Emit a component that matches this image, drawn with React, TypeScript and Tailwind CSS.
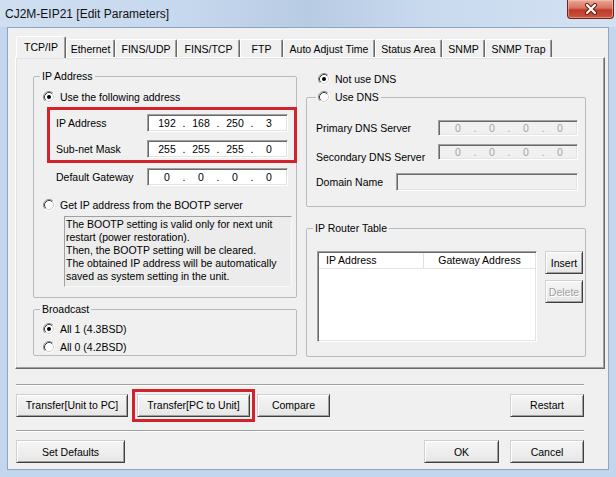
import clsx from "clsx"
import type { ReactNode } from "react"

// classic (non-themed) radio button
const Radio = ({ checked }: { checked?: boolean }) => (
  <svg width="12" height="12" viewBox="0 0 12 12" className="shrink-0">
    <circle cx="6" cy="6" r="4.5" fill="#fff" />
    <path d="M9.89 2.11A5.5 5.5 0 0 0 2.11 9.89" fill="none" stroke="#8a8a8a" />
    <path d="M2.11 9.89A5.5 5.5 0 0 0 9.89 2.11" fill="none" stroke="#fff" />
    <path d="M9.18 2.82A4.5 4.5 0 0 0 2.82 9.18" fill="none" stroke="#404040" />
    <path d="M2.82 9.18A4.5 4.5 0 0 0 9.18 2.82" fill="none" stroke="#d4d0c8" />
    {checked && <circle cx="6" cy="6" r="2" fill="#000" />}
  </svg>
)

const RadioRow = ({ label, checked, className }: { label: string; checked?: boolean; className?: string }) => (
  <div className={clsx("flex items-center gap-[5px] h-[14px]", className)}>
    <Radio checked={checked} />
    <span>{label}</span>
  </div>
)

const Group = ({ legend, className, children }: { legend: ReactNode; className?: string; children: ReactNode }) => (
  <fieldset className={clsx("border border-[#b4bbc1] rounded-[2px] min-w-0", className)}>
    <legend className="ml-[6px] px-[2px] leading-[12px]">{legend}</legend>
    {children}
  </fieldset>
)

const sunken =
  "border border-t-[#a0a0a0] border-l-[#a0a0a0] border-b-white border-r-white shadow-[inset_1px_1px_0_#696969,inset_-1px_-1px_0_#e3e3e3]"

const IpField = ({ values, disabled, className }: { values: string[]; disabled?: boolean; className?: string }) => (
  <div
    className={clsx(
      "flex items-center pl-[4px]",
      sunken,
      disabled ? "bg-[#f0f0f0] text-[#a3a3a3]" : "bg-white text-black",
      className
    )}
  >
    {values.map((v, i) => (
      <div key={i} className="flex">
        {i > 0 && <span className="w-[4px] text-center">.</span>}
        <span className="w-[30px] text-center">{v}</span>
      </div>
    ))}
  </div>
)

const Btn = ({ children, className, disabled }: { children: ReactNode; className?: string; disabled?: boolean }) => (
  <button
    className={clsx(
      "h-[23px] shrink-0 border border-t-[#d0d0d0] border-l-[#d0d0d0] border-b-[#404040] border-r-[#404040] bg-[linear-gradient(#f6f6f6,#e6e6e6)] shadow-[inset_1px_1px_0_#fff,inset_-1px_-1px_0_#a0a0a0]",
      disabled ? "text-[#a0a0a0] [text-shadow:1px_1px_0_#fff]" : "text-black",
      className
    )}
  >
    {children}
  </button>
)

const Separator = () => <div className="ml-[8px] w-[568px] h-[2px] border-t border-t-[#a0a0a0] border-b border-b-white" />

const tabs = [
  { name: "TCP/IP", w: "w-[50px]" },
  { name: "Ethernet", w: "w-[49px]" },
  { name: "FINS/UDP", w: "w-[62px]" },
  { name: "FINS/TCP", w: "w-[63px]" },
  { name: "FTP", w: "w-[43px]" },
  { name: "Auto Adjust Time", w: "w-[92px]" },
  { name: "Status Area", w: "w-[67px]" },
  { name: "SNMP", w: "w-[43px]" },
  { name: "SNMP Trap", w: "w-[67px]" },
]

export default function App() {
  return (
    <div className="w-[616px] h-[477px] flex flex-col bg-[#c2d6ed] font-['Liberation_Sans',Arial,sans-serif] text-[10.5px] leading-[12px] text-black overflow-hidden">
      {/* Title bar */}
      <div className="h-[27px] shrink-0 flex items-start bg-[linear-gradient(90deg,#cfdff1_0%,#c6d8ee_30%,#b7cbe3_50%,#c9daef_70%,#d3e1f2_100%)]">
        <span className="ml-[5px] mt-[7px] text-[12px] leading-[14px] text-[#111]">CJ2M-EIP21 [Edit Parameters]</span>
        <div className="ml-auto mr-[2px] w-[47px] h-[19px] flex items-center justify-center rounded-b-[4px] border border-t-0 border-[#6e2219] bg-[linear-gradient(#e9a897_0%,#d7725f_45%,#c0392b_55%,#c9553f_100%)] shadow-[inset_0_0_0_1px_rgba(255,200,190,0.5)]">
          <svg width="14" height="12" viewBox="0 0 14 12">
            <path d="M3 2L11 10M11 2L3 10" stroke="#5a1a12" strokeWidth="4" strokeLinecap="round" />
            <path d="M3 2L11 10M11 2L3 10" stroke="#fff" strokeWidth="2.2" strokeLinecap="round" />
          </svg>
        </div>
      </div>

      {/* Client area */}
      <div className="ml-[7px] w-[602px] h-[443px] shrink-0 bg-[#f0f0f0] border border-[#8ea6c2] flex flex-col">
        {/* Tabs */}
        <div className="ml-[8px] mt-[8px] h-[21px] flex items-end">
          {tabs.map((t, i) => (
            <div
              key={t.name}
              className={clsx(
                t.w,
                "flex items-center justify-center rounded-t-[2px] border-t border-l border-t-white border-l-white border-r border-r-[#696969] shadow-[inset_-1px_0_0_#a0a0a0]",
                i === 0 ? "h-[22px] -mb-[1px] relative z-10 bg-[#f0f0f0] pb-[2px]" : "h-[18px] bg-[#f0f0f0]"
              )}
            >
              {t.name}
            </div>
          ))}
        </div>

        {/* Tab panel */}
        <div className="ml-[7px] w-[590px] h-[312px] shrink-0 border border-t-white border-l-white border-b-[#696969] border-r-[#696969] shadow-[inset_-1px_-1px_0_#a0a0a0,inset_1px_1px_0_#e3e3e3] flex pl-[17px] pt-[12px]">
          {/* Left column */}
          <div className="w-[264px] flex flex-col">
            <Group legend="IP Address" className="pb-[10px]">
              <RadioRow label="Use the following address" checked className="mt-[8px] pl-[9px]" />
              <div className="mt-[3px] ml-[13px] w-[250px] border-[3px] border-[#d2222b] pt-[4px] pb-[2px] flex flex-col gap-[8px]">
                <div className="flex items-center h-[18px]">
                  <span className="w-[97px] pl-[6px]">IP Address</span>
                  <IpField values={["192", "168", "250", "3"]} className="w-[141px] h-[18px]" />
                </div>
                <div className="flex items-center h-[18px]">
                  <span className="w-[97px] pl-[6px]">Sub-net Mask</span>
                  <IpField values={["255", "255", "255", "0"]} className="w-[141px] h-[18px]" />
                </div>
              </div>
              <div className="mt-[5px] flex items-center h-[18px]">
                <span className="w-[113px] pl-[22px]">Default Gateway</span>
                <IpField values={["0", "0", "0", "0"]} className="w-[141px] h-[18px]" />
              </div>
              <RadioRow label="Get IP address from the BOOTP server" className="mt-[12px] pl-[9px]" />
              <div className="mt-[4px] ml-[30px] w-[228px] h-[71px] border border-t-[#a0a0a0] border-l-[#a0a0a0] border-b-[#f8f8f8] border-r-[#f8f8f8] bg-[#ececec] pl-[1px] pt-[1px] leading-[13px]">
                The BOOTP setting is valid only for next unit
                <br />
                restart (power restoration).
                <br />
                Then, the BOOTP setting will be cleared.
                <br />
                The obtained IP address will be automatically
                <br />
                saved as system setting in the unit.
              </div>
            </Group>
            <Group legend="Broadcast" className="mt-[5px] pb-[1px]">
              <RadioRow label="All 1 (4.3BSD)" checked className="mt-[7px] pl-[9px]" />
              <RadioRow label="All 0 (4.2BSD)" className="mt-[4px] pl-[9px]" />
            </Group>
          </div>

          {/* Right column */}
          <div className="ml-[9px] w-[280px] flex flex-col">
            <RadioRow label="Not use DNS" checked className="mt-[2px] pl-[12px]" />
            <fieldset className="mt-[4px] border border-[#b4bbc1] rounded-[2px] min-w-0 pb-[15px]">
              <legend className="ml-[9px] px-[2px] leading-[14px]">
                <span className="flex items-center gap-[5px]">
                  <Radio />
                  <span>Use DNS</span>
                </span>
              </legend>
              <div className="mt-[16px] flex items-center">
                <span className="w-[131px] pl-[9px]">Primary DNS Server</span>
                <IpField values={["0", "0", "0", "0"]} disabled className="w-[140px] h-[16px]" />
              </div>
              <div className="mt-[5px] flex items-center">
                <span className="w-[131px] pl-[9px] pt-[10px] h-[22px]">Secondary DNS Server</span>
                <IpField values={["0", "0", "0", "0"]} disabled className="w-[140px] h-[16px]" />
              </div>
              <div className="mt-[10px] flex items-center">
                <span className="w-[89px] pl-[9px]">Domain Name</span>
                <div className={clsx("w-[182px] h-[18px] bg-[#f0f0f0]", sunken)} />
              </div>
            </fieldset>

            <Group legend="IP Router Table" className="mt-[15px] pb-[14px]">
              <div className="mt-[17px] pl-[10px] flex items-start">
                <div className={clsx("w-[220px] h-[91px] bg-white flex flex-col", sunken)}>
                  <div className="h-[16px] flex border-b border-[#e5e5e5] mx-[1px] mt-[1px]">
                    <span className="w-[105px] pl-[7px] border-r border-[#e0e0e0] leading-[15px]">IP Address</span>
                    <span className="flex-1 text-center leading-[15px]">Gateway Address</span>
                  </div>
                </div>
                <div className="ml-[8px] flex flex-col gap-[6px]">
                  <Btn className="w-[38px]">Insert</Btn>
                  <Btn className="w-[38px]" disabled>
                    Delete
                  </Btn>
                </div>
              </div>
            </Group>
          </div>
        </div>

        {/* Bottom buttons */}
        <div className="mt-[15px]">
          <Separator />
        </div>
        <div className="mt-[2px] ml-[8px] w-[568px] h-[34px] flex items-center">
          <Btn className="w-[112px]">Transfer[Unit to PC]</Btn>
          <div className="ml-[4px] border-[3px] border-[#d2222b] p-[2px]">
            <Btn className="w-[113px] block">Transfer[PC to Unit]</Btn>
          </div>
          <Btn className="ml-[2px] w-[73px]">Compare</Btn>
          <Btn className="ml-auto w-[74px]">Restart</Btn>
        </div>
        <div className="mt-[8px]">
          <Separator />
        </div>
        <div className="mt-[8px] ml-[8px] w-[568px] flex items-center">
          <Btn className="w-[109px]">Set Defaults</Btn>
          <Btn className="ml-auto w-[75px]">OK</Btn>
          <Btn className="ml-[11px] w-[74px]">Cancel</Btn>
        </div>
      </div>
      <div className="flex-1" />
    </div>
  )
}
